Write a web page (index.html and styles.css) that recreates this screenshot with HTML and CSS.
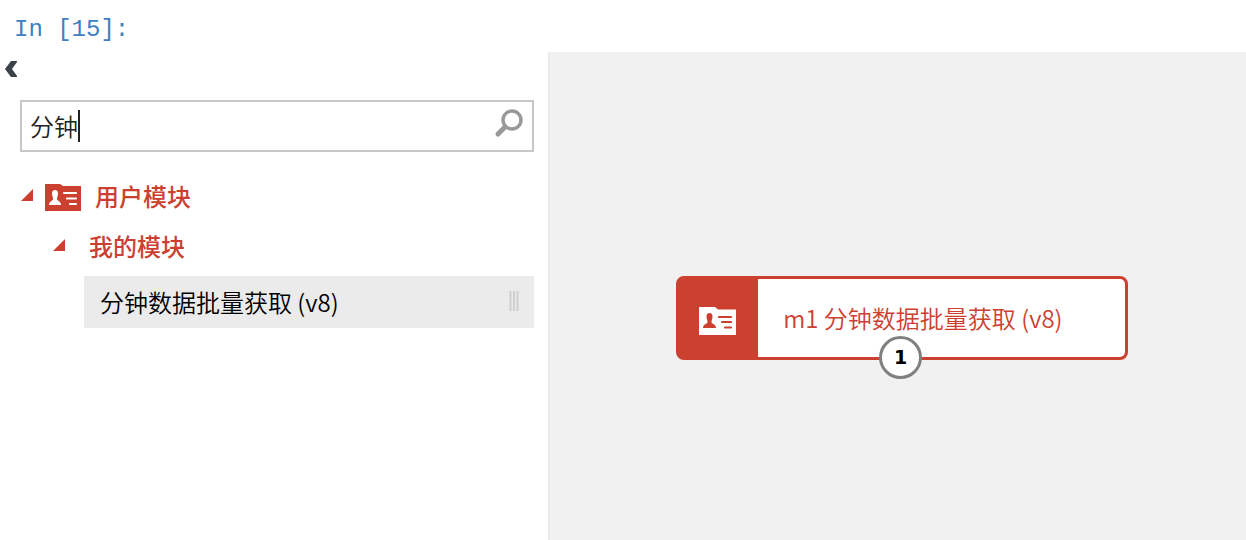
FILE: index.html
```
<!DOCTYPE html>
<html lang="zh-CN">
<head>
  <meta charset="UTF-8">
  <meta name="viewport" content="width=device-width, initial-scale=1.0">
  <title>用户模块</title>
  <link rel="stylesheet" href="styles.css">
</head>
<body>
  <div class="prompt">In [15]:</div>

  <div class="studio">
    <div class="sidebar">
      <button type="button" class="collapse" aria-label="收起">
        <svg width="12" height="16" viewBox="0 0 12 16"><path d="M6 0h6v1L7 8l5 7v1H6L0 8z" fill="#3a4147"/></svg>
      </button>

      <form class="search">
        <input type="text" class="search-input" value="分钟" aria-label="搜索模块">
        <span class="caret"></span>
        <button type="button" class="search-button" aria-label="搜索">
          <svg width="30" height="30" viewBox="0 0 30 30" fill="none" stroke="#999">
            <circle cx="18" cy="12" r="9" stroke-width="3.5"/>
            <path d="M11 19l-7 7" stroke-width="5" stroke-linecap="round"/>
          </svg>
        </button>
      </form>

      <ul class="tree">
        <li>
          <div class="group">
            <svg class="arrow" width="12" height="12" viewBox="0 0 12 12"><path d="M12 0v12H0z" fill="#cc4030"/></svg>
            <svg class="card" width="36" height="27" viewBox="0 0 36 27">
              <path d="M0 0h15l3 2h18v25H0z" fill="#cc4030"/>
              <path d="M10 6c2 0 3 1 3 4 0 2-1 3-1 5 0 2 4 2 4 6H4c0-4 4-4 4-6 0-2-1-3-1-5 0-3 1-4 3-4z" fill="#fff"/>
              <path d="M19 9h12M22 14.5h9M25 20h6" stroke="#fff" stroke-width="2.2" stroke-linecap="round"/>
            </svg>
            <span>用户模块</span>
          </div>
          <ul>
            <li>
              <div class="group subgroup">
                <svg class="arrow" width="12" height="12" viewBox="0 0 12 12"><path d="M12 0v12H0z" fill="#cc4030"/></svg>
                <span>我的模块</span>
              </div>
              <ul>
                <li class="module">
                  <span>分钟数据批量获取 (v8)</span>
                  <svg width="10" height="20" viewBox="0 0 10 20"><path d="M1.5 0v20M5 0v20M8.5 0v20" stroke="#cfcfcf" stroke-width="2"/></svg>
                </li>
              </ul>
            </li>
          </ul>
        </li>
      </ul>
    </div>

    <div class="canvas">
      <div class="node">
        <div class="node-icon">
          <svg width="37" height="28" viewBox="0 0 37 28">
            <path d="M0 0h16l3 2.5h18V28H0z" fill="#fff"/>
            <path d="M10.5 6c2 0 3 1 3 4 0 2-1 3-1 5 0 2 4.5 2 4.5 6H4c0-4 4.5-4 4.5-6 0-2-1-3-1-5 0-3 1-4 3-4z" fill="#cc4030"/>
            <path d="M20 10h12M23 15h9M26 20.5h6" stroke="#cc4030" stroke-width="2.2" stroke-linecap="round"/>
          </svg>
        </div>
        <div class="node-title">m1 分钟数据批量获取 (v8)</div>
        <div class="port">1</div>
      </div>
    </div>
  </div>
</body>
</html>
```
FILE: styles.css
```
* {
  box-sizing: border-box;
}
body {
  display: flex;
  flex-direction: column;
  min-height: 100vh;
  margin: 0;
  font-family: "Noto Sans CJK SC", sans-serif;
  font-size: 24px;
  font-weight: 350;
  line-height: 36px;
  background-color: #fff;
}
ul {
  margin: 0;
  padding: 0;
  list-style: none;
}
svg {
  display: block;
  flex: none;
}
button {
  padding: 0;
  border: none;
  background: none;
  cursor: pointer;
}
.prompt {
  padding: 12px 14px 4px;
  font-family: "Liberation Mono", monospace;
  color: #4080bf;
}
.studio {
  display: flex;
  flex: 1;
}
.sidebar {
  flex: 0 0 44%;
  padding-right: 14px;
}
.collapse {
  display: block;
  margin: 9px 0 0 5px;
}

/* search box */
.search {
  position: relative;
  display: flex;
  height: 52px;
  margin: 23px 0 0 20px;
  border: 2px solid #c8c8c8;
}
.search-input {
  flex: 1;
  min-width: 0;
  padding: 0 8px 2px;
  border: none;
  outline: none;
  background: none;
  font-family: inherit;
  font-size: 24px;
  font-weight: inherit;
  color: #222;
}
.caret {
  position: absolute;
  left: 56px;
  top: 8px;
  width: 2px;
  height: 32px;
  background-color: #222;
}
.search-button {
  align-self: flex-start;
  margin: 6px 8px 0 0;
}

/* module tree */
.tree {
  padding: 20px 0 0 20px;
}
.group {
  display: flex;
  align-items: center;
  height: 50px;
  font-weight: 500;
  color: #cc4030;
}
.group span {
  padding-bottom: 2px;
}
.arrow {
  margin: 0 12px 4px 1px;
}
.card {
  margin-right: 14px;
}
.subgroup {
  padding-left: 32px;
}
.subgroup .arrow {
  margin-right: 24px;
}
.module {
  display: flex;
  align-items: center;
  justify-content: space-between;
  height: 52px;
  margin: 4px 0 0 64px;
  padding: 0 15px 0 16px;
  background-color: #ebebeb;
  color: #000;
}
.module svg {
  margin-bottom: 2px;
}

/* canvas */
.canvas {
  position: relative;
  flex: 1;
  border-left: 2px solid #ebebeb;
  background-color: #f1f1f1;
}
.node {
  position: absolute;
  left: 126px;
  top: 224px;
  display: flex;
  width: 452px;
  height: 84px;
  border: 3px solid #cc4030;
  border-radius: 8px;
  background-color: #fff;
}
.node-icon {
  display: flex;
  align-items: center;
  padding: 6px 22px 0 20px;
  background-color: #cc4030;
}
.node-title {
  align-self: center;
  padding-left: 25px;
  color: #cc4030;
}
.port {
  position: absolute;
  left: 200px;
  top: 57px;
  width: 43px;
  height: 43px;
  border: 3px solid #808080;
  border-radius: 50%;
  background-color: #fff;
  font-family: "DejaVu Sans", sans-serif;
  font-size: 19px;
  font-weight: bold;
  text-align: center;
}
```
